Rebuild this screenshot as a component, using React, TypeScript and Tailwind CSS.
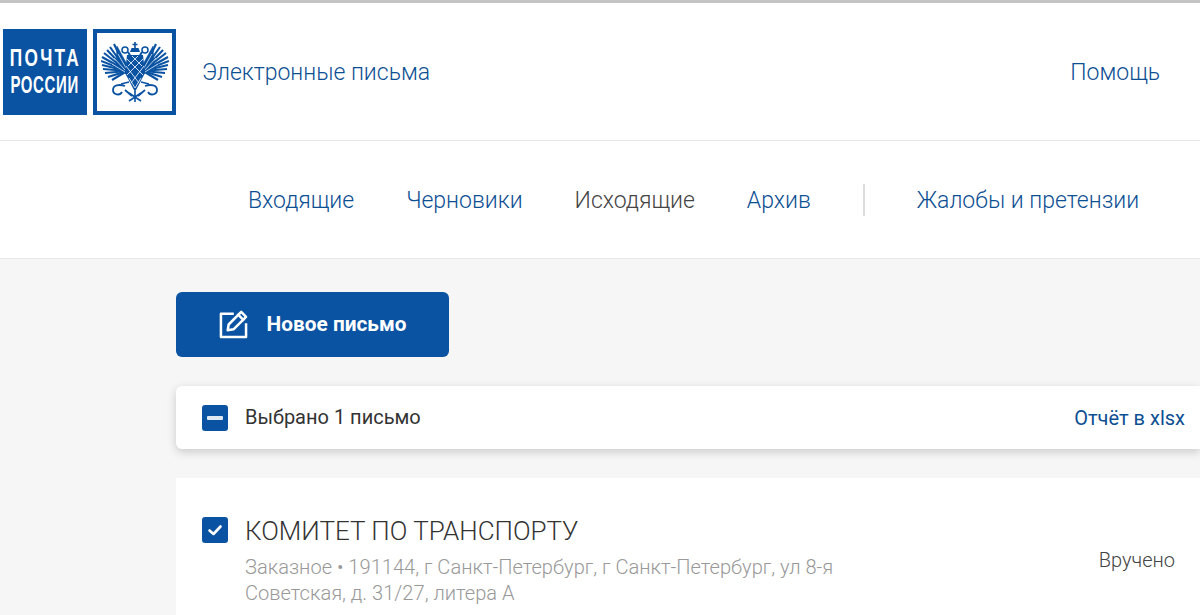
const tips = [
  [13, 2],
  [9, 5],
  [6, 8],
  [3, 11],
  [1, 15],
  [0, 19],
  [1, 23],
  [2, 27],
  [4, 31],
  [7, 35],
  [11, 38],
];

const Eagle = () => (
  <svg viewBox="0 0 68 60" className="w-[68px] h-[60px]" fill="none">
    {/* left side, mirrored for the right one */}
    {[0, 1].map((side) => (
      <g key={side} transform={side ? "matrix(-1 0 0 1 68 0)" : undefined} stroke="#0a53a3">
        {tips.map(([x, y]) => (
          <path key={y} d={`M${x} ${y} L26 29`} strokeWidth="2.1" />
        ))}
        <path d="M16 4 L27 24 L25 32 L15 22 Z" fill="#0a53a3" strokeWidth="0.5" />
        <path d="M17 12 L25 26 M13 16 L24 28 M11 22 L24 30" stroke="#fff" strokeWidth="0.7" />
        <circle cx="24" cy="8" r="3" strokeWidth="1.5" />
        <path d="M27 10 L30 15" strokeWidth="2" />
        <path d="M24 44 c-6 -2 -12 -1 -12 4 c0 5 7 6 9 2 M24 48 L31 54" strokeWidth="1.8" />
        <path d="M20 42 L28 40" strokeWidth="1.4" />
      </g>
    ))}
    <path d="M34 0 v6 M31.5 2.5 h5" stroke="#0a53a3" strokeWidth="1.6" />
    <path d="M29 10 h10 l-1.5 -4 h-7 Z" fill="#0a53a3" />
    <path d="M26 13 h16 L44 31 L34 50 L24 31 Z" fill="#0a53a3" />
    <path d="M26 17 L42 33 M42 17 L26 33 M25 24 L38 41 M43 24 L30 41 M31 14 L41 24 M37 14 L27 24 M28 36 L34 46 M40 36 L34 46" stroke="#fff" strokeWidth="0.8" />
    <path d="M28 59 L40 51 M40 59 L28 51 M34 49 V60" stroke="#0a53a3" strokeWidth="1.6" />
  </svg>
);

const Logo = () => (
  <div className="flex gap-[6px] ml-[3px]">
    <div className="w-[84px] h-[86px] bg-[#0a53a3] flex flex-col items-center justify-center text-white font-['Liberation_Sans',sans-serif] font-bold text-[23px] leading-[26.5px]">
      <span className="scale-x-[0.75] tracking-[3px] whitespace-nowrap">ПОЧТА</span>
      <span className="scale-x-[0.65] tracking-[1px] whitespace-nowrap">РОССИИ</span>
    </div>
    <div className="w-[83px] h-[86px] bg-white border-[4px] border-[#0a53a3] flex items-center justify-center">
      <Eagle />
    </div>
  </div>
);

const navItems = ["Входящие", "Черновики", "Исходящие", "Архив"];

export default function App() {
  return (
    <div className="h-[615px] overflow-hidden bg-[#f6f6f6] font-['Roboto',sans-serif]">
      <div className="h-[3px] bg-[#c4c4c4]" />
      <header className="h-[138px] bg-white border-b border-[#e6e6e6] flex items-center">
        <Logo />
        <span className="ml-[26px] mt-[3px] text-[23px] font-light text-[#0d4f93]">Электронные письма</span>
        <span className="ml-auto mr-[40px] mt-[3px] text-[23px] font-light text-[#0d4f93]">Помощь</span>
      </header>
      <nav className="h-[118px] bg-white border-b border-[#e6e6e6] flex items-center pl-[248px] pt-[4px] text-[23px] font-light text-[#0d4f93]">
        {navItems.map((item) => (
          <span key={item} className={item === "Исходящие" ? "mr-[52px] text-[#444444]" : "mr-[52px]"}>
            {item}
          </span>
        ))}
        <div className="w-[2px] h-[32px] -mt-[4px] bg-[#dcdcdc] mr-[52px]" />
        <span>Жалобы и претензии</span>
      </nav>
      <main className="pl-[176px] pt-[33px]">
        <button className="w-[273px] h-[65px] bg-[#0a53a3] rounded-[6px] flex items-center justify-center gap-[19px] text-white text-[20.8px] font-bold">
          <svg viewBox="0 0 30 30" className="w-[29px] h-[29px]" fill="none" stroke="#fff" strokeWidth="2.6" strokeLinejoin="round" strokeLinecap="square">
            <path d="M14 4 H2 V28 H28 V15" />
            <path d="M9 21 L10 15 L23 2 L28 7 L15 20 Z" />
            <path d="M20 5 L25 10" />
          </svg>
          Новое письмо
        </button>
        <div className="mt-[29px] h-[63px] bg-white rounded-l-[6px] shadow-[0_3px_10px_rgba(0,0,0,0.18)] flex items-center pl-[26px] pr-[15px]">
          <div className="w-[26px] h-[26px] rounded-[3px] bg-[#0a53a3] flex items-center justify-center">
            <div className="w-[16px] h-[4px] rounded-[1px] bg-[#dfe9f4]" />
          </div>
          <span className="ml-[17px] -mt-[2px] text-[20px] text-[#333333]">Выбрано 1 письмо</span>
          <span className="ml-auto text-[20px] text-[#0d4f93]">Отчёт в xlsx</span>
        </div>
        <div className="mt-[29px] h-[200px] bg-white flex items-start pl-[26px] pt-[39px] pr-[25px]">
          <div className="w-[26px] h-[26px] rounded-[3px] bg-[#0a53a3] flex items-center justify-center shrink-0">
            <svg viewBox="0 0 16 16" className="w-[16px] h-[16px]" fill="none" stroke="#fff" strokeWidth="2.6" strokeLinecap="round" strokeLinejoin="round">
              <path d="M2.5 8.5 L6.5 12 L13.5 4.5" />
            </svg>
          </div>
          <div className="ml-[17px] -mt-[3px] w-[600px]">
            <div className="text-[26px] font-light leading-[34px] text-[#333333]">КОМИТЕТ ПО ТРАНСПОРТУ</div>
            <div className="mt-[6px] text-[20.1px] font-light leading-[26px] text-[#999999]">
              Заказное • 191144, г Санкт-Петербург, г Санкт-Петербург, ул 8-я Советская, д. 31/27, литера А
            </div>
          </div>
          <span className="ml-auto mt-[28px] text-[20px] font-light text-[#444444]">Вручено</span>
        </div>
      </main>
    </div>
  );
}
